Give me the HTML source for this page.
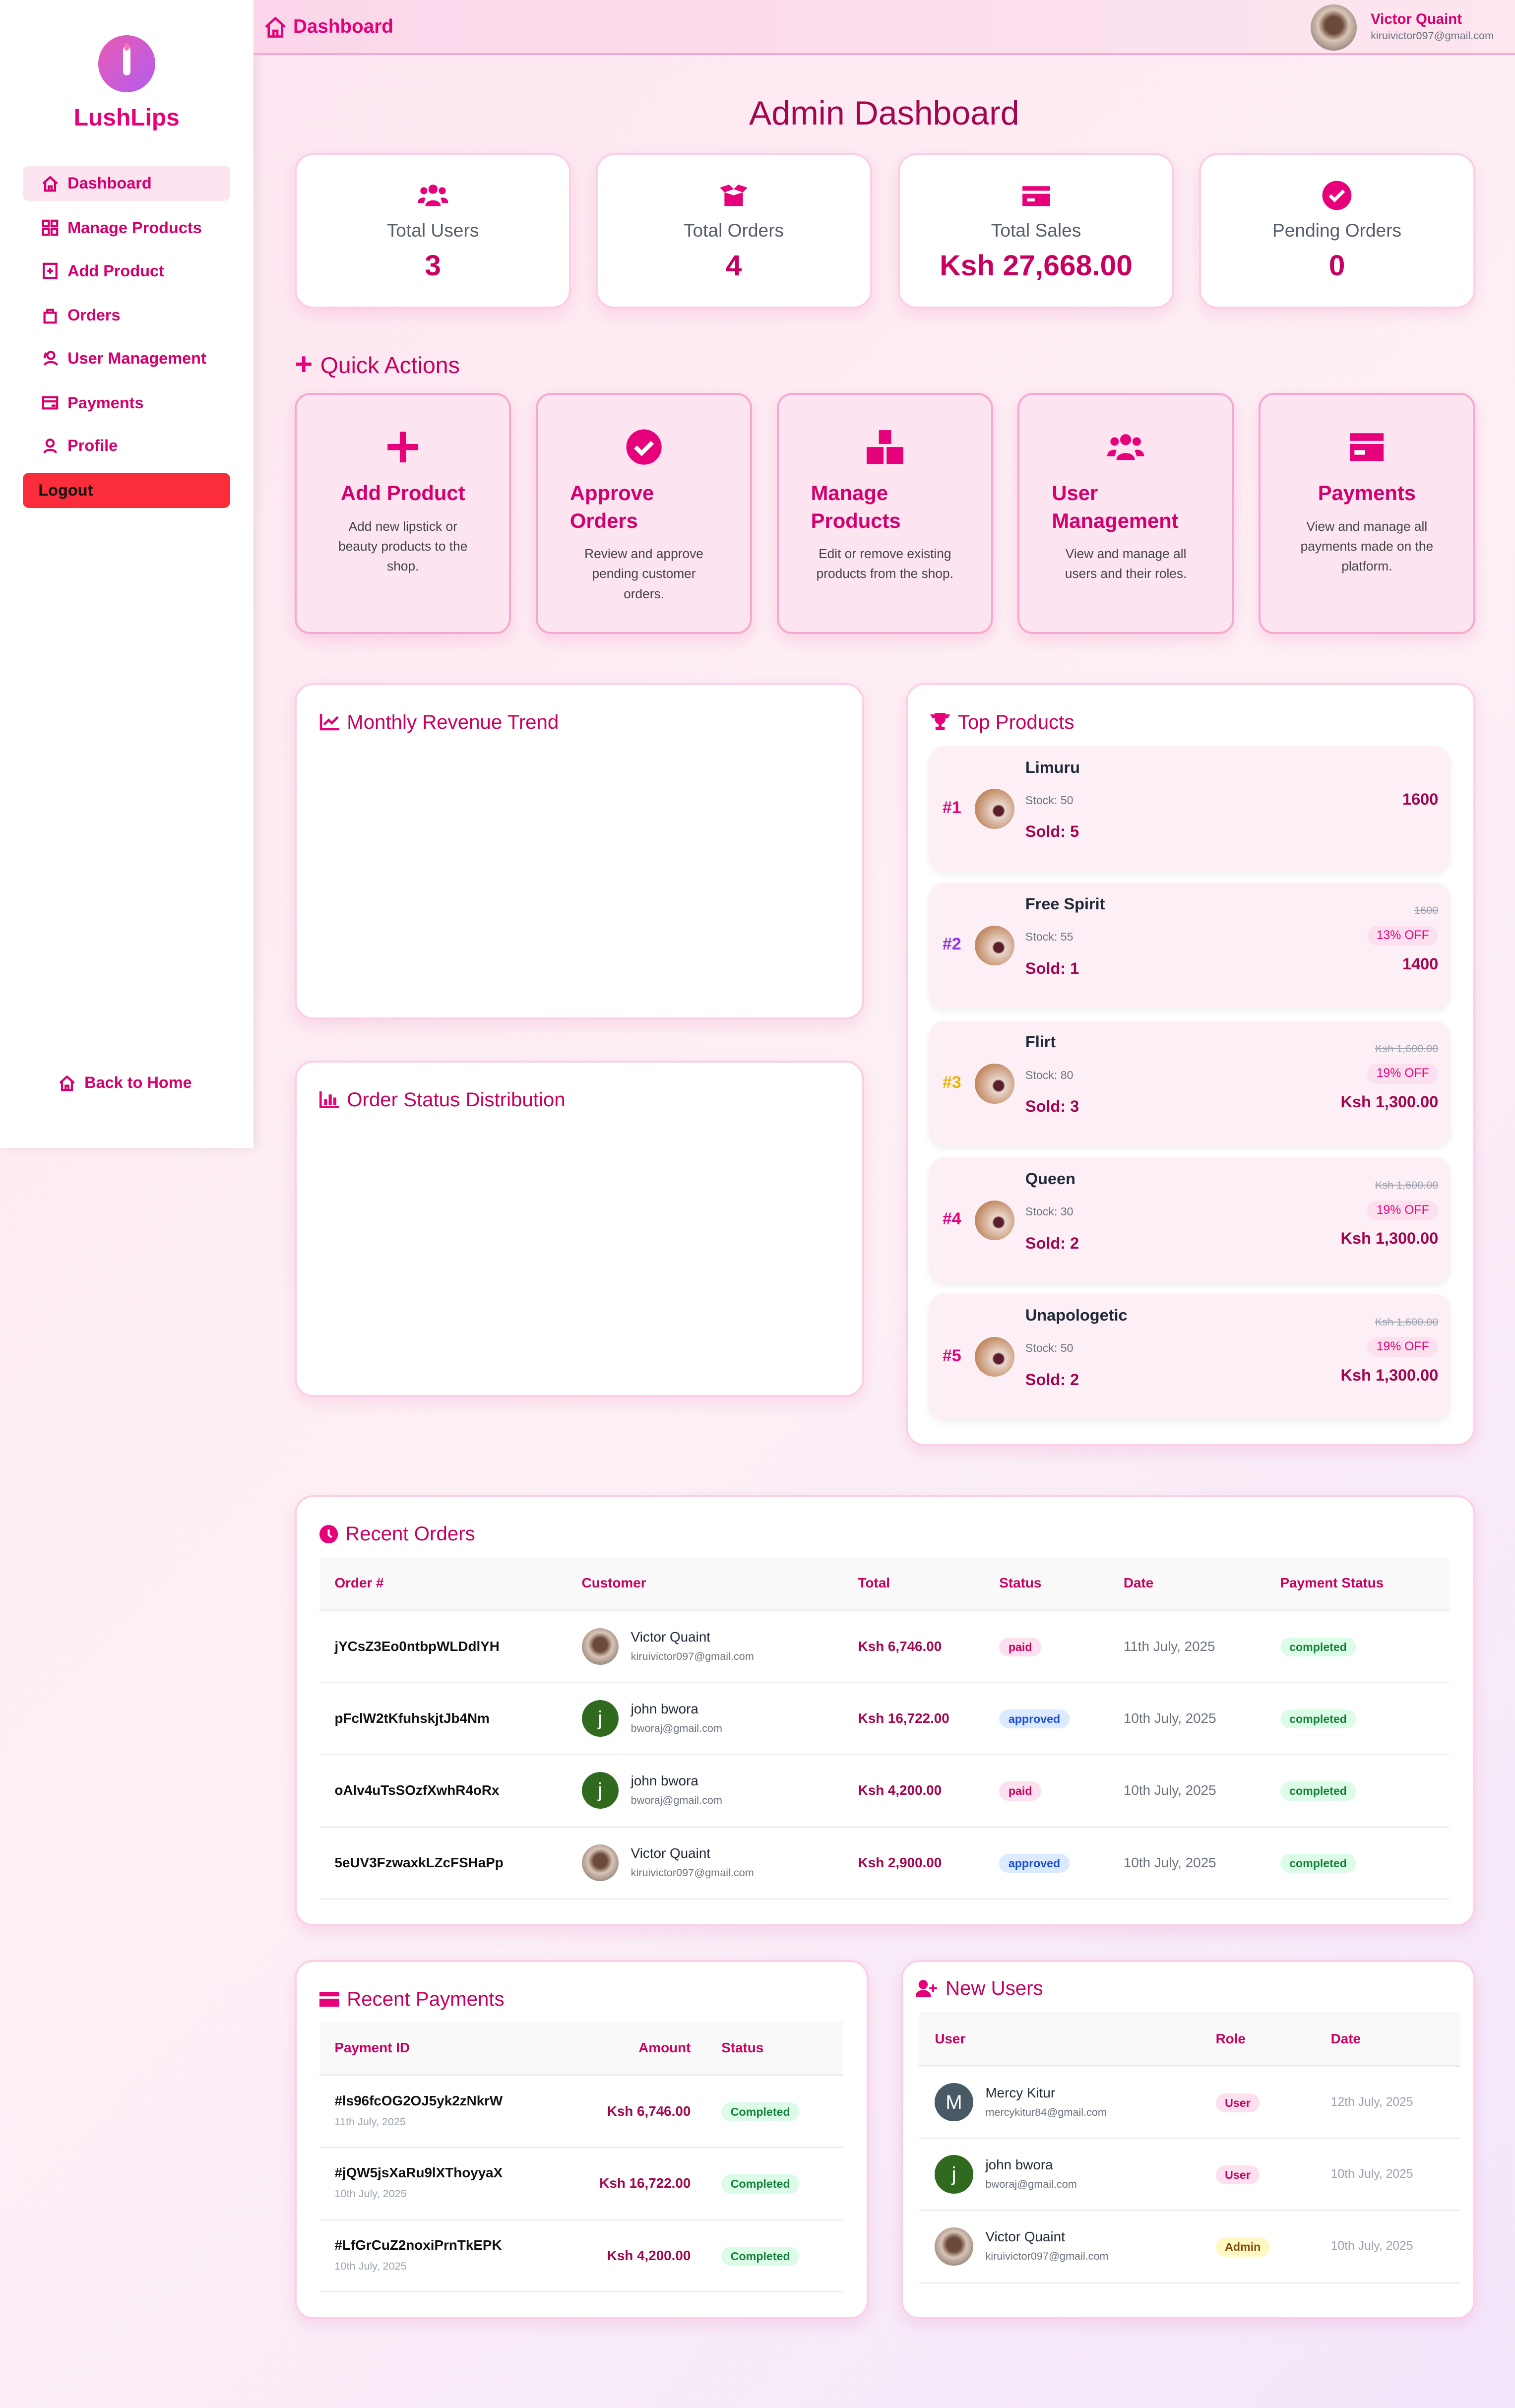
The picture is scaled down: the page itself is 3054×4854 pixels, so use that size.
<!DOCTYPE html>
<html><head><meta charset="utf-8"><style>
*{box-sizing:border-box;margin:0;padding:0}
html,body{width:3054px;height:4854px;overflow:hidden}
body{font-family:"Liberation Sans",sans-serif;background:linear-gradient(135deg,#fde4f0 0%,#fdf0f5 50%,#f3e6fb 100%)}
#r{zoom:3.0942;width:987px;height:1569px;position:relative}
.a{position:absolute}
.pk{color:#e6007a}.dk{color:#a3054f}
.side{left:0;top:0;width:165px;height:748px;background:#fff;box-shadow:2px 0 6px rgba(0,0,0,.08)}
.nav{left:15px;width:135px;height:23px;font-size:10.5px;font-weight:bold;color:#d4006d;display:flex;align-items:center;padding-left:12px;gap:6px;border-radius:4px}
.nav svg{width:11px;height:11px;fill:none;stroke:#d4006d;stroke-width:1.5}
.card{background:#fff;border:1.5px solid #fbcfe5;border-radius:12px;box-shadow:0 4px 10px rgba(230,0,122,.1)}
.stat{top:100px;width:180px;height:101px;text-align:center}
.stat .l{position:absolute;top:42px;width:100%;font-size:12px;color:#555d6b}
.stat .v{position:absolute;top:61px;width:100%;font-size:19px;font-weight:bold;color:#c8005f}
.stat svg{position:absolute;top:18px;left:50%;margin-left:-10px;width:20px;height:16px;fill:#e6007a}
.qa{top:256px;width:141px;height:157px;background:#fce4f1;border:1.5px solid #f7a8d0;border-radius:10px;box-shadow:0 4px 10px rgba(230,0,122,.12);text-align:center}
.qa svg{position:absolute;top:22px;left:50%;margin-left:-12px;width:24px;height:24px}
.qa h3{position:absolute;top:55px;left:0;right:0;font-size:13.5px;color:#d4006d;line-height:18px}
.qa p{position:absolute;left:22px;right:22px;font-size:8.5px;color:#444;line-height:13px}
.ttl{font-size:13px;color:#c8005f;display:flex;align-items:center;gap:5px}
.tp{left:605px;width:340px;height:82px;background:#fcf0f6;border-radius:10px;box-shadow:0 2px 4px rgba(0,0,0,.06)}
.tp .rk{position:absolute;left:9px;top:34px;font-size:11px;font-weight:bold}
.tp .im{position:absolute;left:30px;top:28px;width:26px;height:26px;border-radius:50%;background:radial-gradient(circle at 60% 55%,#5a1d2a 0 15%,#e8d6cc 20%,#c28a62 70%)}
.tp .n{position:absolute;left:63px;top:8px;font-size:10.5px;font-weight:bold;color:#1f2937}
.tp .s{position:absolute;left:63px;top:31px;font-size:7.5px;color:#6b7280}
.tp .sd{position:absolute;left:63px;top:50px;font-size:10.5px;font-weight:bold;color:#a3054f}
.tp .o{position:absolute;right:8px;top:14px;font-size:7px;color:#9ca3af;text-decoration:line-through}
.tp .off{position:absolute;right:8px;top:28px;font-size:8px;color:#e6007a;background:#fce0ef;padding:2px 6px;border-radius:8px}
.tp .pr{position:absolute;right:8px;top:47px;font-size:10.5px;font-weight:bold;color:#a3054f}
table{border-collapse:collapse;width:100%}
th{background:#f9f9f9;color:#c8005f;font-size:9px;text-align:left;height:35px;padding-left:10px;border-bottom:1.5px solid #eee}
td{height:47px;border-bottom:1px solid #eee;padding-left:10px;font-size:9px;color:#111}
.av{width:24px;height:24px;border-radius:50%;display:inline-flex;align-items:center;justify-content:center;color:#fff;font-size:13px;vertical-align:middle;margin-right:8px}
.ph{background:radial-gradient(circle at 50% 45%,#6b4a3a 0 25%,#d9c4b5 45%,#9a8a80 75%)}
.g{background:#2f6a1e}
.cu{display:inline-block;vertical-align:middle;line-height:12px}
.cu b{font-size:9px;color:#1f2937;font-weight:normal;display:block}
.cu i{font-style:normal;font-size:7px;color:#6b7280}
.bd{font-size:7.5px;padding:2px 6px;border-radius:8px;font-weight:bold}
.bp{background:#fce0ef;color:#c8005f}.bb{background:#dbeafe;color:#1d4ed8}.bg{background:#dcfce7;color:#15803d}.by{background:#fef9c3;color:#854d0e}
.money{color:#a3054f;font-weight:bold}
.dt{color:#6b7280}
.oid{font-weight:bold;color:#111}
</style></head><body><div id="r">

<div class="a side"></div>
<div class="a" style="left:64px;top:23px;width:37px;height:37px;border-radius:50%;background:linear-gradient(135deg,#e85bb0,#b45cf0)"></div>
<div class="a" style="left:80px;top:30px;width:5px;height:19px;border-radius:3px;background:#fff"></div>
<div class="a" style="left:81px;top:28px;width:3px;height:5px;border-radius:2px;background:#f472b6"></div>
<div class="a pk" style="left:0;width:165px;top:68px;text-align:center;font-size:15.5px;font-weight:bold">LushLips</div>

<div class="a nav" style="top:108px;background:#fde4f1"><svg viewBox="0 0 12 12"><path d="M1 6L6 1.5 11 6M2.5 5v6h7V5M5 11V8h2v3"/></svg>Dashboard</div>
<div class="a nav" style="top:137px"><svg viewBox="0 0 12 12"><rect x="1" y="1" width="4" height="4"/><rect x="7" y="1" width="4" height="4"/><rect x="1" y="7" width="4" height="4"/><rect x="7" y="7" width="4" height="4"/></svg>Manage Products</div>
<div class="a nav" style="top:165px"><svg viewBox="0 0 12 12"><rect x="1.5" y="1" width="9" height="10"/><path d="M6 4v4M4 6h4"/></svg>Add Product</div>
<div class="a nav" style="top:194px"><svg viewBox="0 0 12 12"><path d="M2 4h8v7H2zM4 4V2h4v2"/></svg>Orders</div>
<div class="a nav" style="top:222px"><svg viewBox="0 0 12 12"><circle cx="6.5" cy="4" r="2.5"/><path d="M2 11c1-3 8-3 9 0M3 2l-1 4"/></svg>User Management</div>
<div class="a nav" style="top:251px"><svg viewBox="0 0 12 12"><rect x="1" y="2" width="10" height="8"/><path d="M1 5h10M7 8h3"/></svg>Payments</div>
<div class="a nav" style="top:279px"><svg viewBox="0 0 12 12"><circle cx="6" cy="4" r="2.5"/><path d="M2 11c0-3 8-3 8 0"/></svg>Profile</div>
<div class="a nav" style="top:308px;background:#fb2d3b;color:#111;padding-left:10px">Logout</div>
<div class="a nav" style="top:694px;left:26px;background:none"><svg viewBox="0 0 12 12"><path d="M1 6L6 1.5 11 6M2.5 5v6h7V5M5 11V8h2v3"/></svg>Back to Home</div>

<div class="a" style="left:165px;top:0;width:822px;height:36px;background:linear-gradient(90deg,#fbd6ea,#fde6ef);border-bottom:1.5px solid #f7a8d0"></div>
<div class="a pk" style="left:172px;top:10px;font-size:12.5px;font-weight:bold;display:flex;gap:4px;align-items:center"><svg width="15" height="15" viewBox="0 0 12 12" fill="none" stroke="#e6007a" stroke-width="1.2"><path d="M1 6L6 1.5 11 6M2.5 5v6h7V5M5 11V8h2v3"/></svg>Dashboard</div>
<div class="a ph" style="left:854px;top:3px;width:30px;height:30px;border-radius:50%"></div>
<div class="a" style="left:893px;top:7px;font-size:9.5px;font-weight:bold;color:#d4006d">Victor Quaint</div>
<div class="a" style="left:893px;top:19px;font-size:7px;color:#6b7280">kiruivictor097@gmail.com</div>

<div class="a" style="left:165px;width:822px;top:61px;text-align:center;font-size:22px;color:#a3054f">Admin Dashboard</div>

<div class="a card stat" style="left:192px"><svg viewBox="0 0 20 16"><circle cx="10" cy="4" r="3"/><circle cx="4" cy="5" r="2.3"/><circle cx="16" cy="5" r="2.3"/><path d="M5 15c0-5 10-5 10 0zM0 13c0-4 5-4 5-3l-1 3zM20 13c0-4-5-4-5-3l1 3z"/></svg><div class="l">Total Users</div><div class="v">3</div></div>
<div class="a card stat" style="left:388px"><svg viewBox="0 0 20 16"><path d="M4 6l6 2 6-2v9H4zM1 3l6-2 3 3-6 2zM19 3l-6-2-3 3 6 2z"/></svg><div class="l">Total Orders</div><div class="v">4</div></div>
<div class="a card stat" style="left:585px"><svg viewBox="0 0 20 16"><path d="M1 2h18v3H1zM1 7h18v8H1z"/><rect x="4" y="10" width="5" height="2" fill="#fff"/></svg><div class="l">Total Sales</div><div class="v">Ksh 27,668.00</div></div>
<div class="a card stat" style="left:781px"><svg viewBox="0 0 20 20" style="height:20px;top:16px"><circle cx="10" cy="10" r="9.5"/><path d="M5.5 10l3 3 6-6" stroke="#fff" stroke-width="2.2" fill="none"/></svg><div class="l">Pending Orders</div><div class="v">0</div></div>

<div class="a ttl" style="left:192px;top:229px;font-size:15px"><span style="font-size:20px;font-weight:bold;color:#e6007a;line-height:15px">+</span>Quick Actions</div>

<div class="a qa" style="left:192px"><svg viewBox="0 0 24 24"><path d="M10 2h4v8h8v4h-8v8h-4v-8H2v-4h8z" fill="#e6007a"/></svg><h3>Add Product</h3><p style="top:79px">Add new lipstick or beauty products to the shop.</p></div>
<div class="a qa" style="left:349px"><svg viewBox="0 0 24 24"><circle cx="12" cy="12" r="11.5" fill="#e6007a"/><path d="M6.5 12l4 4 7-7" stroke="#fff" stroke-width="2.8" fill="none"/></svg><h3 style="text-align:left;left:21px">Approve<br>Orders</h3><p style="top:97px;left:26px;right:26px">Review and approve pending customer orders.</p></div>
<div class="a qa" style="left:506px"><svg viewBox="0 0 24 24" fill="#e6007a"><rect x="8" y="1" width="8" height="9"/><rect x="0" y="12" width="11" height="11"/><rect x="13" y="12" width="11" height="11"/></svg><h3 style="text-align:left;left:21px">Manage<br>Products</h3><p style="top:97px">Edit or remove existing products from the shop.</p></div>
<div class="a qa" style="left:663px"><svg viewBox="0 0 20 16"><g fill="#e6007a"><circle cx="10" cy="4" r="3"/><circle cx="4" cy="5" r="2.3"/><circle cx="16" cy="5" r="2.3"/><path d="M5 15c0-5 10-5 10 0zM0 13c0-4 5-4 5-3l-1 3zM20 13c0-4-5-4-5-3l1 3z"/></g></svg><h3 style="text-align:left;left:21px">User<br>Management</h3><p style="top:97px">View and manage all users and their roles.</p></div>
<div class="a qa" style="left:820px"><svg viewBox="0 0 24 24" fill="#e6007a"><path d="M1 3h22v5H1zM1 10h22v11H1z"/><rect x="4" y="14" width="7" height="3" fill="#fff"/></svg><h3>Payments</h3><p style="top:79px">View and manage all payments made on the platform.</p></div>

<div class="a card" style="left:192px;top:445px;width:371px;height:219px"></div>
<div class="a ttl" style="left:208px;top:463px"><svg width="13" height="11" viewBox="0 0 13 11" fill="none" stroke="#e6007a" stroke-width="1.5"><path d="M1 0v10h12M3 7l3-3 2 2 4-4"/></svg>Monthly Revenue Trend</div>
<div class="a card" style="left:192px;top:691px;width:371px;height:219px"></div>
<div class="a ttl" style="left:208px;top:709px"><svg width="13" height="11" viewBox="0 0 13 11" fill="#e6007a"><path d="M0 0h1.5v9.5H13V11H0z"/><rect x="3" y="5" width="2" height="4"/><rect x="6" y="2" width="2" height="7"/><rect x="9" y="4" width="2" height="5"/></svg>Order Status Distribution</div>

<div class="a card" style="left:590px;top:445px;width:371px;height:497px"></div>
<div class="a ttl" style="left:606px;top:463px"><svg width="13" height="12" viewBox="0 0 13 12" fill="#e6007a"><path d="M3 0h7v4a3.5 3.5 0 01-7 0zM0 1h3v2.5H1.5zM13 1h-3v2.5h1.5zM5.5 7h2v2h2v2h-6V9h2z"/></svg>Top Products</div>

<div class="a tp" style="top:486px"><div class="rk pk">#1</div><div class="im"></div><div class="n">Limuru</div><div class="s">Stock: 50</div><div class="sd">Sold: 5</div><div class="pr" style="top:29px">1600</div></div>
<div class="a tp" style="top:575px"><div class="rk" style="color:#9333ea">#2</div><div class="im"></div><div class="n">Free Spirit</div><div class="s">Stock: 55</div><div class="sd">Sold: 1</div><div class="o">1600</div><div class="off">13% OFF</div><div class="pr">1400</div></div>
<div class="a tp" style="top:665px"><div class="rk" style="color:#eab308">#3</div><div class="im"></div><div class="n">Flirt</div><div class="s">Stock: 80</div><div class="sd">Sold: 3</div><div class="o">Ksh 1,600.00</div><div class="off">19% OFF</div><div class="pr">Ksh 1,300.00</div></div>
<div class="a tp" style="top:754px"><div class="rk pk">#4</div><div class="im"></div><div class="n">Queen</div><div class="s">Stock: 30</div><div class="sd">Sold: 2</div><div class="o">Ksh 1,600.00</div><div class="off">19% OFF</div><div class="pr">Ksh 1,300.00</div></div>
<div class="a tp" style="top:843px"><div class="rk pk">#5</div><div class="im"></div><div class="n">Unapologetic</div><div class="s">Stock: 50</div><div class="sd">Sold: 2</div><div class="o">Ksh 1,600.00</div><div class="off">19% OFF</div><div class="pr">Ksh 1,300.00</div></div>

<div class="a card" style="left:192px;top:974px;width:769px;height:281px"></div>
<div class="a ttl" style="left:208px;top:992px"><svg width="12" height="12" viewBox="0 0 12 12"><circle cx="6" cy="6" r="6" fill="#e6007a"/><path d="M6 3v3.5l2 1.5" stroke="#fff" stroke-width="1.3" fill="none"/></svg>Recent Orders</div>
<div class="a" style="left:208px;top:1014px;width:736px"><table>
<tr><th style="width:161px">Order #</th><th style="width:180px">Customer</th><th style="width:92px">Total</th><th style="width:81px">Status</th><th style="width:102px">Date</th><th>Payment Status</th></tr>
<tr><td class="oid">jYCsZ3Eo0ntbpWLDdlYH</td><td><span class="av ph"></span><span class="cu"><b>Victor Quaint</b><i>kiruivictor097@gmail.com</i></span></td><td class="money">Ksh 6,746.00</td><td><span class="bd bp">paid</span></td><td class="dt">11th July, 2025</td><td><span class="bd bg">completed</span></td></tr>
<tr><td class="oid">pFclW2tKfuhskjtJb4Nm</td><td><span class="av g">j</span><span class="cu"><b>john bwora</b><i>bworaj@gmail.com</i></span></td><td class="money">Ksh 16,722.00</td><td><span class="bd bb">approved</span></td><td class="dt">10th July, 2025</td><td><span class="bd bg">completed</span></td></tr>
<tr><td class="oid">oAlv4uTsSOzfXwhR4oRx</td><td><span class="av g">j</span><span class="cu"><b>john bwora</b><i>bworaj@gmail.com</i></span></td><td class="money">Ksh 4,200.00</td><td><span class="bd bp">paid</span></td><td class="dt">10th July, 2025</td><td><span class="bd bg">completed</span></td></tr>
<tr><td class="oid">5eUV3FzwaxkLZcFSHaPp</td><td><span class="av ph"></span><span class="cu"><b>Victor Quaint</b><i>kiruivictor097@gmail.com</i></span></td><td class="money">Ksh 2,900.00</td><td><span class="bd bb">approved</span></td><td class="dt">10th July, 2025</td><td><span class="bd bg">completed</span></td></tr>
</table></div>

<div class="a card" style="left:192px;top:1277px;width:374px;height:234px"></div>
<div class="a ttl" style="left:208px;top:1295px"><svg width="13" height="10" viewBox="0 0 13 10" fill="#e6007a"><path d="M0 0h13v3H0zM0 4.5h13V10H0z"/></svg>Recent Payments</div>
<div class="a" style="left:208px;top:1317px;width:341px"><table>
<tr><th style="width:155px">Payment ID</th><th style="width:97px;text-align:right;padding-right:10px">Amount</th><th>Status</th></tr>
<tr><td style="line-height:13px"><b>#ls96fcOG2OJ5yk2zNkrW</b><br><span style="font-size:7px;color:#9ca3af">11th July, 2025</span></td><td class="money" style="text-align:right;padding-right:10px">Ksh 6,746.00</td><td><span class="bd bg">Completed</span></td></tr>
<tr><td style="line-height:13px"><b>#jQW5jsXaRu9lXThoyyaX</b><br><span style="font-size:7px;color:#9ca3af">10th July, 2025</span></td><td class="money" style="text-align:right;padding-right:10px">Ksh 16,722.00</td><td><span class="bd bg">Completed</span></td></tr>
<tr><td style="line-height:13px"><b>#LfGrCuZ2noxiPrnTkEPK</b><br><span style="font-size:7px;color:#9ca3af">10th July, 2025</span></td><td class="money" style="text-align:right;padding-right:10px">Ksh 4,200.00</td><td><span class="bd bg">Completed</span></td></tr>
</table></div>

<div class="a card" style="left:587px;top:1277px;width:374px;height:234px"></div>
<div class="a ttl" style="left:597px;top:1288px"><svg width="14" height="11" viewBox="0 0 14 11" fill="#e6007a"><circle cx="4.5" cy="3" r="3"/><path d="M0 11c0-5 9-5 9 0zM11 3v5M8.5 5.5h5" stroke="#e6007a" stroke-width="1.3"/></svg>New Users</div>
<div class="a" style="left:599px;top:1311px;width:352px"><table>
<tr><th style="width:183px">User</th><th style="width:75px">Role</th><th>Date</th></tr>
<tr><td><span class="av" style="background:#475a66;width:25px;height:25px">M</span><span class="cu"><b>Mercy Kitur</b><i>mercykitur84@gmail.com</i></span></td><td><span class="bd bp">User</span></td><td style="color:#9ca3af;font-size:8px">12th July, 2025</td></tr>
<tr><td><span class="av g" style="width:25px;height:25px">j</span><span class="cu"><b>john bwora</b><i>bworaj@gmail.com</i></span></td><td><span class="bd bp">User</span></td><td style="color:#9ca3af;font-size:8px">10th July, 2025</td></tr>
<tr><td><span class="av ph" style="width:25px;height:25px"></span><span class="cu"><b>Victor Quaint</b><i>kiruivictor097@gmail.com</i></span></td><td><span class="bd by">Admin</span></td><td style="color:#9ca3af;font-size:8px">10th July, 2025</td></tr>
</table></div>

</div></body></html>
